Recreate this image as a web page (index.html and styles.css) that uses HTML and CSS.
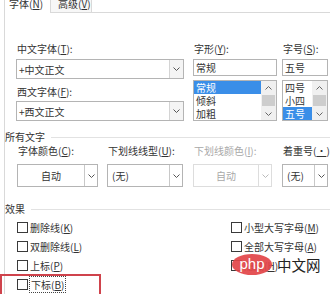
FILE: index.html
```html
<!DOCTYPE html>
<html lang="zh-CN">
<head>
    <meta charset="UTF-8">
    <title>字体</title>
    <link rel="stylesheet" href="styles.css">
</head>
<body>
    <div class="tabbar">
        <div class="tab tab-active">字体(<u>N</u>)</div>
        <div class="tab tab-other">高级(<u>V</u>)</div>
        <div class="tab-rest"></div>
    </div>

    <div class="panel">
        <div class="font-row">
            <div class="col col-name">
                <div class="lbl">中文字体(<u>T</u>):</div>
                <div class="combo-edit">
                    <span class="edit-text">+中文正文</span>
                    <span class="edit-btn"><svg width="7" height="4" viewBox="0 0 7 4"><polyline points="0.5,0.5 3.5,3.5 6.5,0.5" fill="none" stroke="#555" stroke-width="1"/></svg></span>
                </div>
                <div class="lbl lbl-second">西文字体(<u>F</u>):</div>
                <div class="combo-edit">
                    <span class="edit-text">+西文正文</span>
                    <span class="edit-btn"><svg width="7" height="4" viewBox="0 0 7 4"><polyline points="0.5,0.5 3.5,3.5 6.5,0.5" fill="none" stroke="#555" stroke-width="1"/></svg></span>
                </div>
            </div>

            <div class="col col-style">
                <div class="lbl">字形(<u>Y</u>):</div>
                <div class="field">常规</div>
                <div class="listbox">
                    <div class="list-items">
                        <div class="item selected">常规</div>
                        <div class="item">倾斜</div>
                        <div class="item">加粗</div>
                    </div>
                    <div class="vscroll">
                        <span class="arrow"><svg width="7" height="4" viewBox="0 0 7 4"><polyline points="0.5,3.5 3.5,0.5 6.5,3.5" fill="none" stroke="#666" stroke-width="1"/></svg></span>
                        <span class="thumb"></span>
                        <span class="arrow"><svg width="7" height="4" viewBox="0 0 7 4"><polyline points="0.5,0.5 3.5,3.5 6.5,0.5" fill="none" stroke="#666" stroke-width="1"/></svg></span>
                    </div>
                </div>
            </div>

            <div class="col col-size">
                <div class="lbl">字号(<u>S</u>):</div>
                <div class="field">五号</div>
                <div class="listbox">
                    <div class="list-items">
                        <div class="item">四号</div>
                        <div class="item">小四</div>
                        <div class="item selected">五号</div>
                    </div>
                    <div class="vscroll">
                        <span class="arrow"><svg width="7" height="4" viewBox="0 0 7 4"><polyline points="0.5,3.5 3.5,0.5 6.5,3.5" fill="none" stroke="#666" stroke-width="1"/></svg></span>
                        <span class="thumb"></span>
                        <span class="arrow"><svg width="7" height="4" viewBox="0 0 7 4"><polyline points="0.5,0.5 3.5,3.5 6.5,0.5" fill="none" stroke="#666" stroke-width="1"/></svg></span>
                    </div>
                </div>
            </div>
        </div>

        <div class="group-title"><span>所有文字</span></div>

        <div class="text-row">
            <div class="tcol tcol-color">
                <div class="lbl">字体颜色(<u>C</u>):</div>
                <div class="combo combo-center">
                    <span class="combo-text">自动</span>
                    <span class="combo-btn"><svg width="7" height="4" viewBox="0 0 7 4"><polyline points="0.5,0.5 3.5,3.5 6.5,0.5" fill="none" stroke="#555" stroke-width="1"/></svg></span>
                </div>
            </div>
            <div class="tcol tcol-line">
                <div class="lbl">下划线线型(<u>U</u>):</div>
                <div class="combo">
                    <span class="combo-text">(无)</span>
                    <span class="combo-btn"><svg width="7" height="4" viewBox="0 0 7 4"><polyline points="0.5,0.5 3.5,3.5 6.5,0.5" fill="none" stroke="#555" stroke-width="1"/></svg></span>
                </div>
            </div>
            <div class="tcol tcol-lcolor disabled">
                <div class="lbl">下划线颜色(<u>I</u>):</div>
                <div class="combo combo-center">
                    <span class="combo-text">自动</span>
                    <span class="combo-btn"><svg width="7" height="4" viewBox="0 0 7 4"><polyline points="0.5,0.5 3.5,3.5 6.5,0.5" fill="none" stroke="#bbb" stroke-width="1"/></svg></span>
                </div>
            </div>
            <div class="tcol tcol-dot">
                <div class="lbl">着重号(<u>·</u>):</div>
                <div class="combo">
                    <span class="combo-text">(无)</span>
                    <span class="combo-btn"><svg width="7" height="4" viewBox="0 0 7 4"><polyline points="0.5,0.5 3.5,3.5 6.5,0.5" fill="none" stroke="#555" stroke-width="1"/></svg></span>
                </div>
            </div>
        </div>

        <div class="group-title group-effects"><span>效果</span></div>

        <div class="effects">
            <div class="effects-col">
                <div class="check-row"><span class="check"></span>删除线(<u>K</u>)</div>
                <div class="check-row"><span class="check"></span>双删除线(<u>L</u>)</div>
                <div class="check-row"><span class="check"></span>上标(<u>P</u>)</div>
                <div class="check-row"><span class="check"></span><span class="focus">下标(<u>B</u>)</span></div>
            </div>
            <div class="effects-col">
                <div class="check-row"><span class="check"></span>小型大写字母(<u>M</u>)</div>
                <div class="check-row"><span class="check"></span>全部大写字母(<u>A</u>)</div>
                <div class="check-row"><span class="check"></span>隐藏(<u>H</u>)</div>
            </div>
        </div>
    </div>

    <div class="mark-box"></div>
    <div class="watermark">
        <span class="php-logo">php</span>
        <span class="php-text">中文网</span>
    </div>
</body>
</html>
```

FILE: styles.css
```css
* {
    margin: 0;
    padding: 0;
    box-sizing: border-box;
}

body {
    width: 330px;
    height: 294px;
    overflow: hidden;
    position: relative;
    background: #ffffff;
    font-family: "Noto Sans CJK SC", "Microsoft YaHei", sans-serif;
    font-size: 10px;
    color: #333333;
}

u {
    text-decoration: underline;
    text-underline-offset: 1px;
}

/* Tabs */
.tabbar {
    display: flex;
    height: 13px;
}

.tab {
    height: 13px;
    line-height: 8px;
    white-space: nowrap;
}

.tab-active {
    margin-left: 4px;
    width: 46px;
    padding-left: 4px;
    border-left: 1px solid #d9d9d9;
}

.tab-other {
    width: 42px;
    padding-left: 7px;
    background: #f7f7f7;
    border: 1px solid #d9d9d9;
    border-top: none;
}

.tab-rest {
    flex: 1;
    border-bottom: 1px solid #d9d9d9;
}

.panel {
    margin-left: 4px;
    height: 281px;
    border-left: 1px solid #d9d9d9;
}

.lbl {
    height: 14px;
    line-height: 14px;
    margin-bottom: 3px;
    padding-left: 1px;
    white-space: nowrap;
}

/* Font name / style / size */
.font-row {
    display: flex;
    padding: 29px 0 0 11px;
}

.col {
    display: flex;
    flex-direction: column;
}

.col-name { width: 168px; }
.col-style { width: 84px; margin-left: 9px; }
.col-size { width: 46px; margin-left: 5px; }

.lbl-second {
    margin-top: 6px;
    margin-bottom: 2px;
}

.combo-edit {
    display: flex;
    align-items: center;
    height: 20px;
    border: 1px solid #b4b4b4;
    background: #fff;
}

.edit-text {
    flex: 1;
    padding-left: 2px;
}

.edit-btn {
    display: flex;
    align-items: center;
    justify-content: center;
    width: 14px;
    height: 18px;
    border-left: 1px solid #d4d4d4;
    background: #f4f4f4;
}

.field {
    height: 17px;
    line-height: 15px;
    padding-left: 2px;
    border: 1px solid #b4b4b4;
    margin-bottom: 4px;
}

.listbox {
    display: flex;
    height: 41px;
    border: 1px solid #b4b4b4;
}

.list-items {
    flex: 1;
}

.item {
    height: 13px;
    line-height: 13px;
    padding-left: 2px;
}

.item.selected {
    background: #3a8ee8;
    color: #ffffff;
}

.vscroll {
    display: flex;
    flex-direction: column;
    width: 15px;
    background: #f0f0f0;
}

.arrow {
    display: flex;
    align-items: center;
    justify-content: center;
    height: 13px;
}

.thumb {
    flex: 1;
    margin: 1px 1px;
    background: #cdcdcd;
}

/* Group titles */
.group-title {
    display: flex;
    align-items: center;
    height: 14px;
    line-height: 14px;
    margin-top: 9px;
}

.group-title::after {
    content: '';
    flex: 1;
    margin-left: 6px;
    border-top: 1px solid #e2e2e2;
}

.group-effects {
    margin-top: 15px;
}

/* All text row */
.text-row {
    display: flex;
    padding-left: 12px;
}

.tcol .lbl {
    margin-bottom: 6px;
}

.tcol-color { width: 81px; }
.tcol-line { width: 76px; margin-left: 9px; }
.tcol-lcolor { width: 79px; margin-left: 10px; }
.tcol-dot { width: 46px; margin-left: 10px; }

.combo {
    display: flex;
    height: 23px;
    border: 1px solid #b4b4b4;
    background: #fff;
}

.combo-text {
    flex: 1;
    line-height: 21px;
    padding-left: 4px;
    white-space: nowrap;
}

.combo-center .combo-text {
    text-align: center;
    padding-left: 0;
}

.combo-btn {
    display: flex;
    align-items: center;
    justify-content: center;
    width: 13px;
    border-left: 1px solid #c8c8c8;
}

.disabled .lbl,
.disabled .combo-text {
    color: #a8a8a8;
}

.disabled .combo,
.disabled .combo-btn {
    border-color: #dddddd;
}

/* Effects */
.effects {
    display: grid;
    grid-template-columns: 214px 1fr;
    margin-top: 2px;
    padding-left: 12px;
}

.check-row {
    display: flex;
    align-items: center;
    height: 19px;
    white-space: nowrap;
}

.check {
    width: 11px;
    height: 11px;
    margin-right: 2px;
    border: 1px solid #3a3a3a;
    background: #fff;
}

.focus {
    outline: 1px dotted #444;
    outline-offset: 0;
    padding: 0 1px;
}

/* Annotation overlays */
.mark-box {
    position: absolute;
    left: 0;
    top: 274px;
    width: 101px;
    height: 30px;
    border: 2px solid #cf434c;
}

.watermark {
    position: absolute;
    left: 232px;
    top: 254px;
    display: flex;
    align-items: center;
}

.php-logo {
    width: 40px;
    height: 21px;
    border-radius: 50%;
    background: rgba(226, 68, 72, 0.92);
    color: #ffffff;
    font-family: "Liberation Sans", Arial, sans-serif;
    font-size: 15px;
    line-height: 19px;
    text-align: center;
}

.php-text {
    margin-left: 5px;
    font-size: 14.5px;
    color: #222;
}
```
